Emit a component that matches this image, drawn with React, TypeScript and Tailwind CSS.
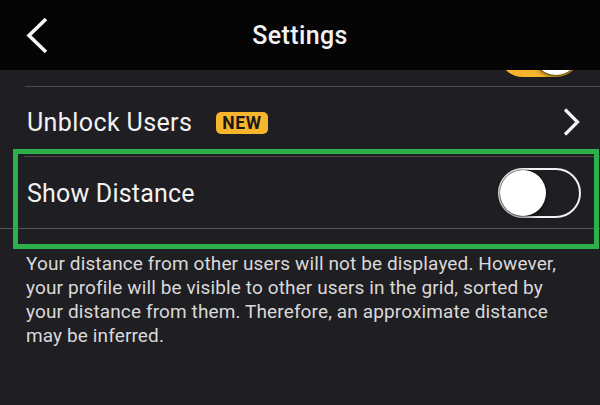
import React from 'react'

function Toggle({ on }: { on: boolean }) {
    return (
        <div
            className={
                on
                    ? 'w-[83px] h-[50px] rounded-full bg-[#f6b52c] border-2 border-[#f6b52c] flex items-center justify-end'
                    : 'w-[83px] h-[50px] rounded-full border-2 border-[#f2f2f2] flex items-center'
            }
        >
            <div className="w-[46px] h-[46px] rounded-full bg-white shadow-[0_0_0_1px_rgba(0,0,0,0.25),0_2px_4px_rgba(0,0,0,0.5)]" />
        </div>
    )
}

export default function App() {
    return (
        <div
            className="relative w-[600px] h-[405px] overflow-hidden bg-[#1f1e22] text-[#f2f2f2]"
            style={{ fontFamily: 'Roboto, "Noto Sans", sans-serif' }}
        >
            {/* Header */}
            <div className="relative z-10 h-[70px] bg-[#050505] flex items-center justify-center">
                <svg className="absolute left-[25px] top-[16px]" width="26" height="40" viewBox="0 0 26 40">
                    <polyline points="21,3 4,19.5 21,36" fill="none" stroke="#f5f5f5" strokeWidth="3.6" />
                </svg>
                <h1 className="text-[25px] font-medium tracking-[0.4px] mt-[2px]">Settings</h1>
            </div>

            {/* previous row, scrolled under the header */}
            <div className="h-[16px] overflow-hidden flex items-end justify-end pr-[19px]">
                <div className="mb-[9px] shrink-0">
                    <Toggle on />
                </div>
            </div>
            <div className="ml-[25px] h-px bg-[#4d4d50]" />

            {/* Unblock Users */}
            <div className="h-[69px] flex items-center pl-[27px] pr-[20px]">
                <span className="text-[25px] tracking-[0.4px] mt-[3px]">Unblock Users</span>
                <span className="ml-[24px] mt-[2px] h-[22px] px-[6px] rounded-[5px] bg-[#f6b52c] text-[#1c1a17] text-[17.5px] font-bold leading-[22px] tracking-[0.6px]">
                    NEW
                </span>
                <svg className="ml-auto mt-[1px]" width="17" height="28" viewBox="0 0 17 28">
                    <polyline points="2,1.5 14.5,14 2,26.5" fill="none" stroke="#f5f5f5" strokeWidth="3.2" />
                </svg>
            </div>
            <div className="ml-[24px] h-px bg-[#48484b]" />

            {/* Show Distance */}
            <div className="h-[71px] flex items-center pl-[27px] pr-[19px]">
                <span className="text-[25px] tracking-[0.2px] mt-[2px]">Show Distance</span>
                <div className="ml-auto">
                    <Toggle on={false} />
                </div>
            </div>
            <div className="h-px bg-[#55555a]" />

            <p className="pt-[23px] pl-[26px] pr-[30px] text-[19px] leading-[24px] tracking-[0.12px] text-[#d9d9d9]">
                Your distance from other users will not be displayed. However, your profile will be visible to
                other users in the grid, sorted by your distance from them. Therefore, an approximate distance
                may be inferred.
            </p>

            {/* annotation frame */}
            <div className="absolute left-[13px] top-[149px] w-[586px] h-[100px] border-[5px] border-[#2db04b]" />
        </div>
    )
}
